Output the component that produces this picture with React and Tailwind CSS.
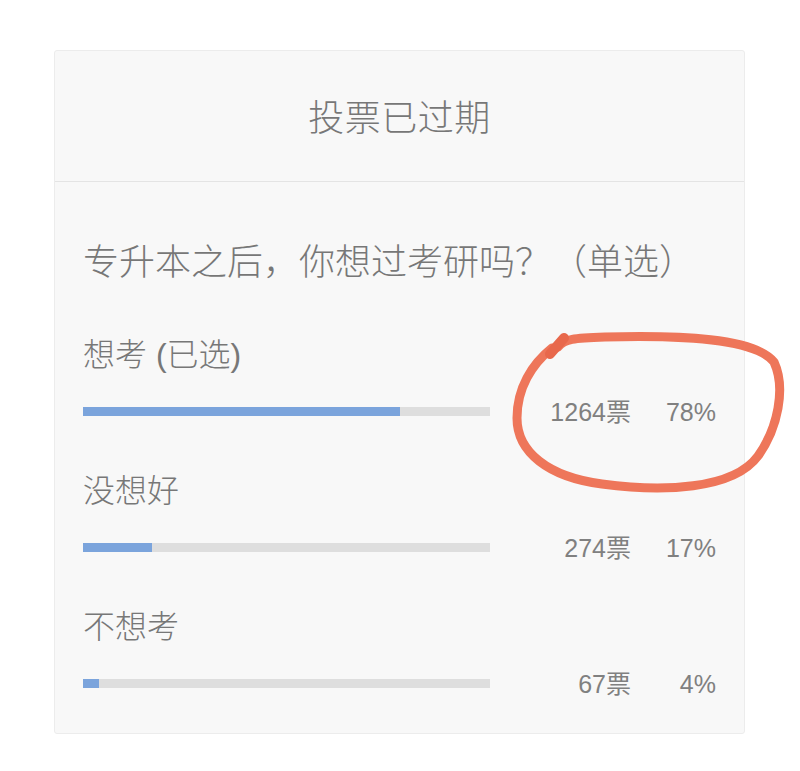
import React from 'react'

const options = [
    { label: '想考 (已选)', votes: 1264, pct: 78 },
    { label: '没想好', votes: 274, pct: 17 },
    { label: '不想考', votes: 67, pct: 4 },
]

function Option({ label, votes, pct }){
    return (
        <div className="flex flex-col">
            <div className="h-[44px] leading-[44px] text-[32px] font-light text-[#777]">{label}</div>
            <div className="mt-[14px] h-[40px] flex items-center">
                <div className="w-[407px] h-[9px] bg-[#dedede]">
                    <div className="h-full bg-[#7ba4dc]" style={{ width: pct + '%' }} />
                </div>
                <div className="flex-1 flex justify-end items-center text-[25px] text-[#808080] pt-[3px]">
                    <span>{votes}票</span>
                    <span className="w-[85px] text-right">{pct}%</span>
                </div>
            </div>
        </div>
    )
}

export default function App(){
    return (
        <div className="relative w-[800px] h-[771px] bg-white pt-[50px] pl-[54px]" style={{ fontFamily: '"Liberation Sans", "Noto Sans CJK SC", sans-serif' }}>
            <div className="w-[691px] h-[684px] bg-[#f8f8f8] border border-[#ececec] rounded-[3px] flex flex-col">
                <div className="h-[134px] pt-[5px] flex items-center justify-center border-b border-[#e4e4e4]">
                    <span className="text-[36px] font-light text-[#777] tracking-[0.5px]">投票已过期</span>
                </div>
                <div className="px-[28px] pt-[57px] pb-[30px] flex flex-col">
                    <div className="h-[48px] leading-[48px] text-[36px] font-light text-[#777]">专升本之后，你想过考研吗？（单选）</div>
                    <div className="mt-[46px] flex flex-col gap-[38px]">
                        {options.map(o => <Option key={o.label} {...o} />)}
                    </div>
                </div>
            </div>
            {/* hand-drawn marker circle */}
            <svg className="absolute inset-0 pointer-events-none" width="800" height="771" viewBox="0 0 800 771">
                <path d="M 558 347 C 564 339, 574 338, 605 337 C 680 335, 755 338, 774 362 C 786 388, 778 428, 758 456 C 733 490, 662 492, 602 484 C 548 477, 517 452, 517 418 C 517 388, 532 364, 552 348" fill="none" stroke="#ee765a" strokeWidth="9" strokeLinecap="round" strokeLinejoin="round" />
                <path d="M 550 354 L 564 338" fill="none" stroke="#e8684c" strokeWidth="10" strokeLinecap="round" />
            </svg>
        </div>
    )
}
